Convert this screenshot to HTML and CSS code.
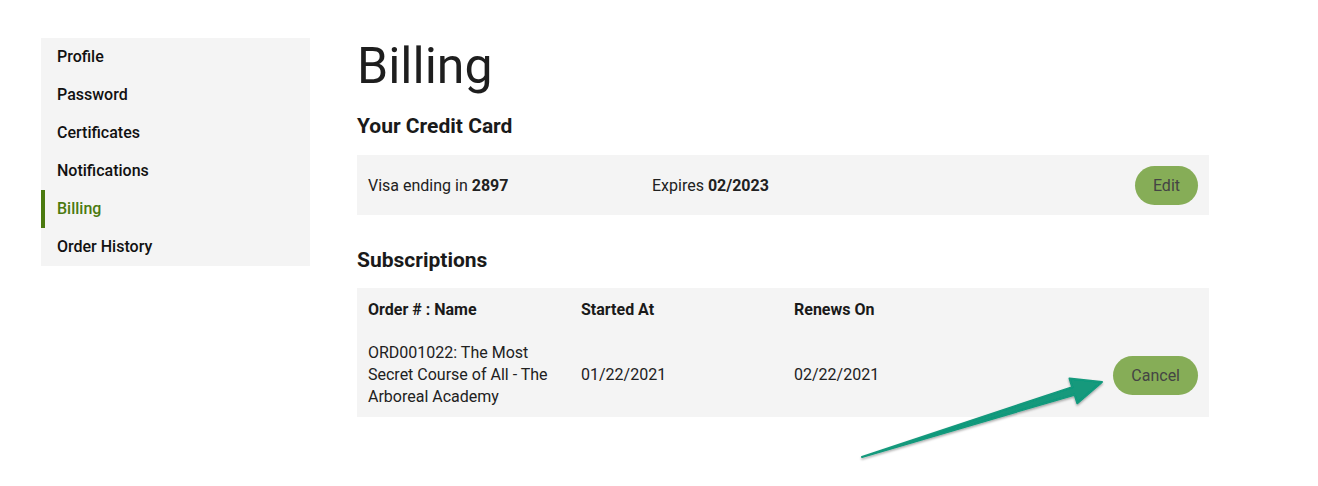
FILE: index.html
```html
<!DOCTYPE html>
<html lang="en">
<head>
    <meta charset="UTF-8">
    <meta name="viewport" content="width=device-width, initial-scale=1.0">
    <title>Billing</title>
    <link rel="stylesheet" href="styles.css">
</head>
<body>
    <div class="page">
        <nav class="sidebar">
            <a href="#">Profile</a>
            <a href="#">Password</a>
            <a href="#">Certificates</a>
            <a href="#">Notifications</a>
            <a href="#" class="active">Billing</a>
            <a href="#">Order History</a>
        </nav>

        <main class="content">
            <h1>Billing</h1>

            <h2 class="card-title">Your Credit Card</h2>
            <div class="card-row">
                <div class="cell">Visa ending in <b>2897</b></div>
                <div class="cell">Expires <b>02/2023</b></div>
                <div class="cell right"><button type="button" class="pill">Edit</button></div>
            </div>

            <h2 class="subs-title">Subscriptions</h2>
            <table class="subs">
                <thead>
                    <tr>
                        <th>Order # : Name</th>
                        <th>Started At</th>
                        <th>Renews On</th>
                        <th></th>
                    </tr>
                </thead>
                <tbody>
                    <tr>
                        <td>ORD001022: The Most Secret Course of All - The Arboreal Academy</td>
                        <td>01/22/2021</td>
                        <td>02/22/2021</td>
                        <td class="right"><button type="button" class="pill">Cancel</button></td>
                    </tr>
                </tbody>
            </table>
        </main>
    </div>

    <!-- annotation arrow pointing at Cancel -->
    <svg class="arrow" width="1318" height="486" viewBox="0 0 1318 486">
        <defs>
            <filter id="shadow" x="-10%" y="-10%" width="120%" height="130%">
                <feDropShadow dx="0" dy="1.5" stdDeviation="1" flood-color="#000" flood-opacity="0.35"/>
            </filter>
        </defs>
        <polygon points="862,457 1072.2,387.1 1069.5,378.5 1102,382 1077.3,403.3 1074.6,394.7"
                 fill="#12997c" stroke="#12997c" stroke-width="2" stroke-linejoin="round" filter="url(#shadow)"/>
    </svg>
</body>
</html>
```

FILE: styles.css
```css
body {
    margin: 0;
    font-family: Roboto, "Liberation Sans", Arial, sans-serif;
    font-size: 16px;
    color: #212121;
    background-color: #fff;
}
.page {
    display: flex;
    align-items: flex-start;
    gap: 47px;
    padding: 38px 0 0 41px;
}
.sidebar {
    width: 269px;
    background-color: #f4f4f4;
    display: flex;
    flex-direction: column;
}
.sidebar a {
    display: block;
    height: 38px;
    line-height: 38px;
    padding-left: 16px;
    font-weight: 500;
    color: #111;
    text-decoration: none;
}
.sidebar a.active {
    border-left: 4px solid #4b7a0f;
    padding-left: 12px;
    color: #4b7a0f;
}
.content {
    width: 852px;
}
h1 {
    margin: 0;
    font-size: 50px;
    line-height: 56px;
    font-weight: 400;
    color: #1e1e1e;
}
h2 {
    font-size: 21px;
    line-height: 24px;
    font-weight: 700;
    color: #1a1a1a;
}
.card-title {
    margin: 20px 0 17px;
}
.subs-title {
    margin: 33px 0 16px;
}
.card-row {
    display: grid;
    grid-template-columns: repeat(3, 1fr);
    align-items: center;
    height: 60px;
    background-color: #f4f4f4;
}
.cell {
    padding: 0 11px;
}
.right {
    text-align: right;
}
b {
    font-weight: 700;
}
.pill {
    height: 39px;
    padding: 0 18px;
    border: none;
    border-radius: 20px;
    background-color: #86ad57;
    color: #444;
    font-family: inherit;
    font-size: 16px;
    cursor: pointer;
}
.subs {
    width: 100%;
    table-layout: fixed;
    border-collapse: collapse;
    background-color: #f4f4f4;
}
.subs th,
.subs td {
    padding: 11px 11px 10px;
    line-height: 22px;
    text-align: left;
    vertical-align: middle;
}
.subs td {
    padding-bottom: 9px;
}
.subs th {
    font-weight: 700;
    color: #1a1a1a;
}
.subs td.right {
    text-align: right;
}
.arrow {
    position: absolute;
    top: 0;
    left: 0;
    pointer-events: none;
}
```
